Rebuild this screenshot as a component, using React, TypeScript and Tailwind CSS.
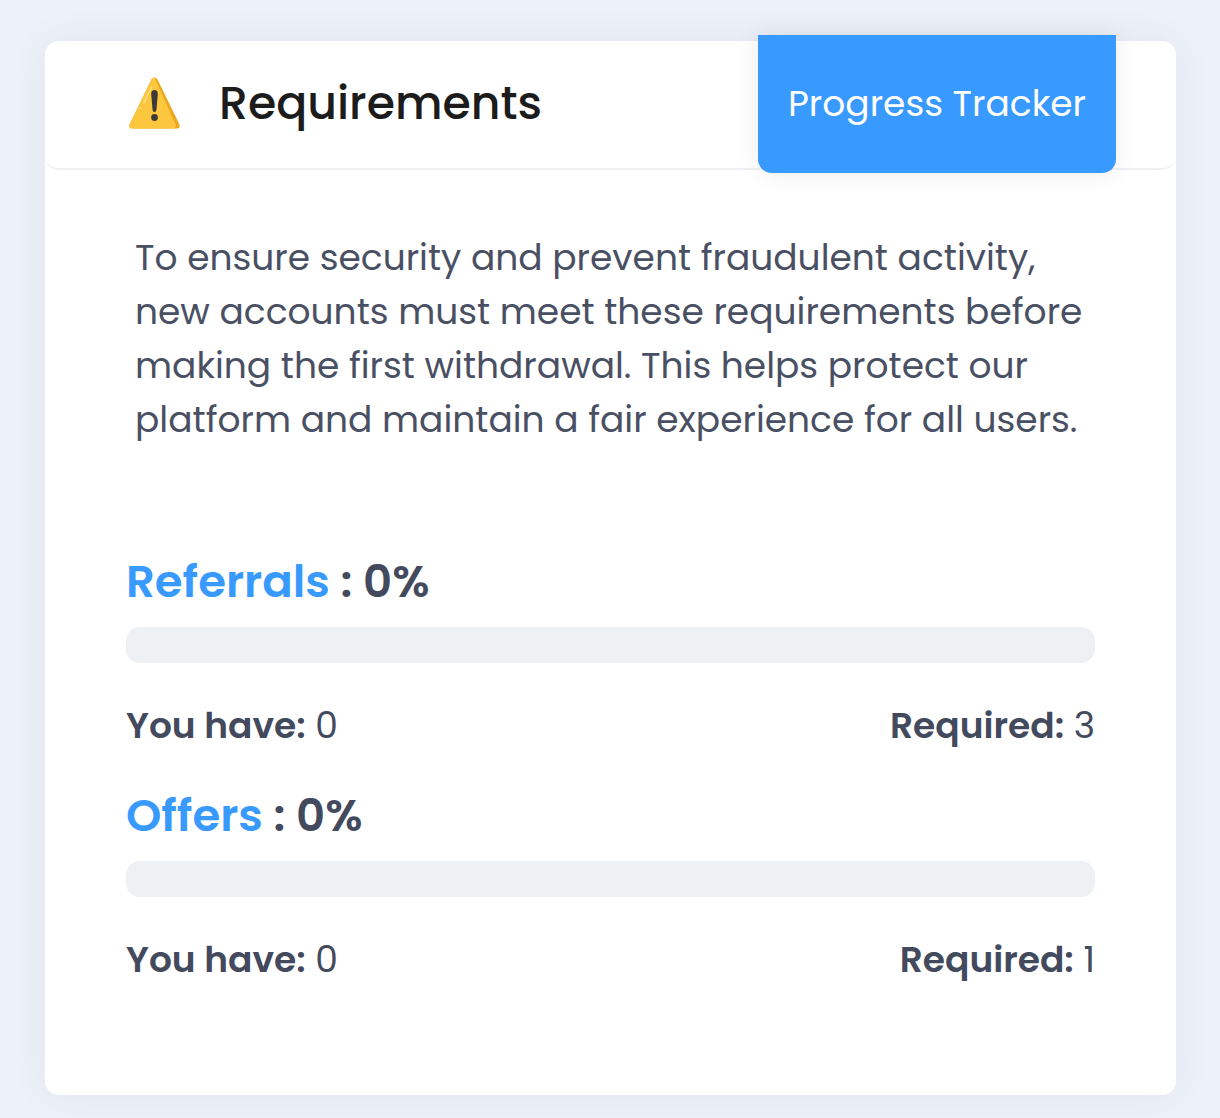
function Warn() {
  return (
    <svg width="51" height="52" viewBox="0 0 52 52" preserveAspectRatio="none" className="shrink-0">
      <path d="M26 0.5 C24.6 0.5 23.6 1.3 22.9 2.6 L0.8 47 C-0.4 49.6 0.6 51.5 3.2 51.5 L48.8 51.5 C51.4 51.5 52.4 49.6 51.2 47 L29.1 2.6 C28.4 1.3 27.4 0.5 26 0.5 Z" fill="#eda71f" />
      <path d="M26 0.5 C24.6 0.5 23.6 1.3 22.9 2.6 L0.8 47 C-0.4 49.6 0.6 51.5 3.2 51.5 L45 51.5 C47.5 51.5 48.3 49.6 47.2 47 L27.6 4 C27.2 2.8 26.8 1.4 26 0.5 Z" fill="#fcc63f" />
      <path d="M22.5 9.5 L14 27 L15.2 27.5 L23.6 10 Z" fill="#ffe58a" />
      <circle cx="11.5" cy="31" r="1" fill="#ffe58a" />
      <path d="M22.6 16.5 C22.6 14.6 24 13 26 13 C28 13 29.4 14.6 29.4 16.5 L28 32.5 C27.9 34.2 27.2 35 26 35 C24.8 35 24.1 34.2 24 32.5 Z" fill="#3b3a36" />
      <circle cx="26" cy="40.5" r="3.4" fill="#3b3a36" />
    </svg>
  );
}

function Tracker({ name, have, need }: { name: string; have: number; need: number }) {
  return (
    <div>
      <h3 className="text-[45px] leading-[54px] font-semibold text-[#434a5e]">
        <span className="text-[#3899fe]">{name}</span> : 0%
      </h3>
      <div className="mt-[18px] h-9 rounded-[14px] bg-[#eef1f3]" />
      <div className="mt-9 flex justify-between text-[36px] leading-[54px] text-[#434a5e]">
        <span><b className="font-semibold">You have:</b> {have}</span>
        <span><b className="font-semibold">Required:</b> {need}</span>
      </div>
    </div>
  );
}

export default function App() {
  return (
    <div className="min-h-[1118px] bg-[#edf1fa] pt-[41px] pl-[45px] pr-[44px] font-['Poppins','Inter','Noto_Sans',sans-serif]">
      <div className="h-[1054px] rounded-[14px] bg-white shadow-[0_0_36px_rgba(60,70,90,0.07)]">
        <header className="flex h-[129px] items-start justify-between rounded-[14px] border-b-2 border-[#eef0f3] pl-[84px] pr-[60px]">
          <div className="flex h-[124px] items-center gap-[39px]">
            <Warn />
            <h2 className="text-[45.8px] font-medium text-[#1c1c1c]">Requirements</h2>
          </div>
          <div className="-mt-[6px] flex h-[138px] w-[358px] items-center justify-center rounded-b-[14px] bg-[#3899fe] text-[36px] text-white shadow-[0_0_24px_rgba(0,0,0,0.08)]">
            Progress Tracker
          </div>
        </header>
        <div className="px-[81px]">
          <p className="mt-[61px] pl-[9px] text-[36px] leading-[54px] text-[#4a5063]">
            To ensure security and prevent fraudulent activity, new accounts must meet these requirements before making the first withdrawal. This helps protect our platform and maintain a fair experience for all users.
          </p>
          <div className="mt-[108px] flex flex-col gap-9">
            <Tracker name="Referrals" have={0} need={3} />
            <Tracker name="Offers" have={0} need={1} />
          </div>
        </div>
      </div>
    </div>
  );
}
